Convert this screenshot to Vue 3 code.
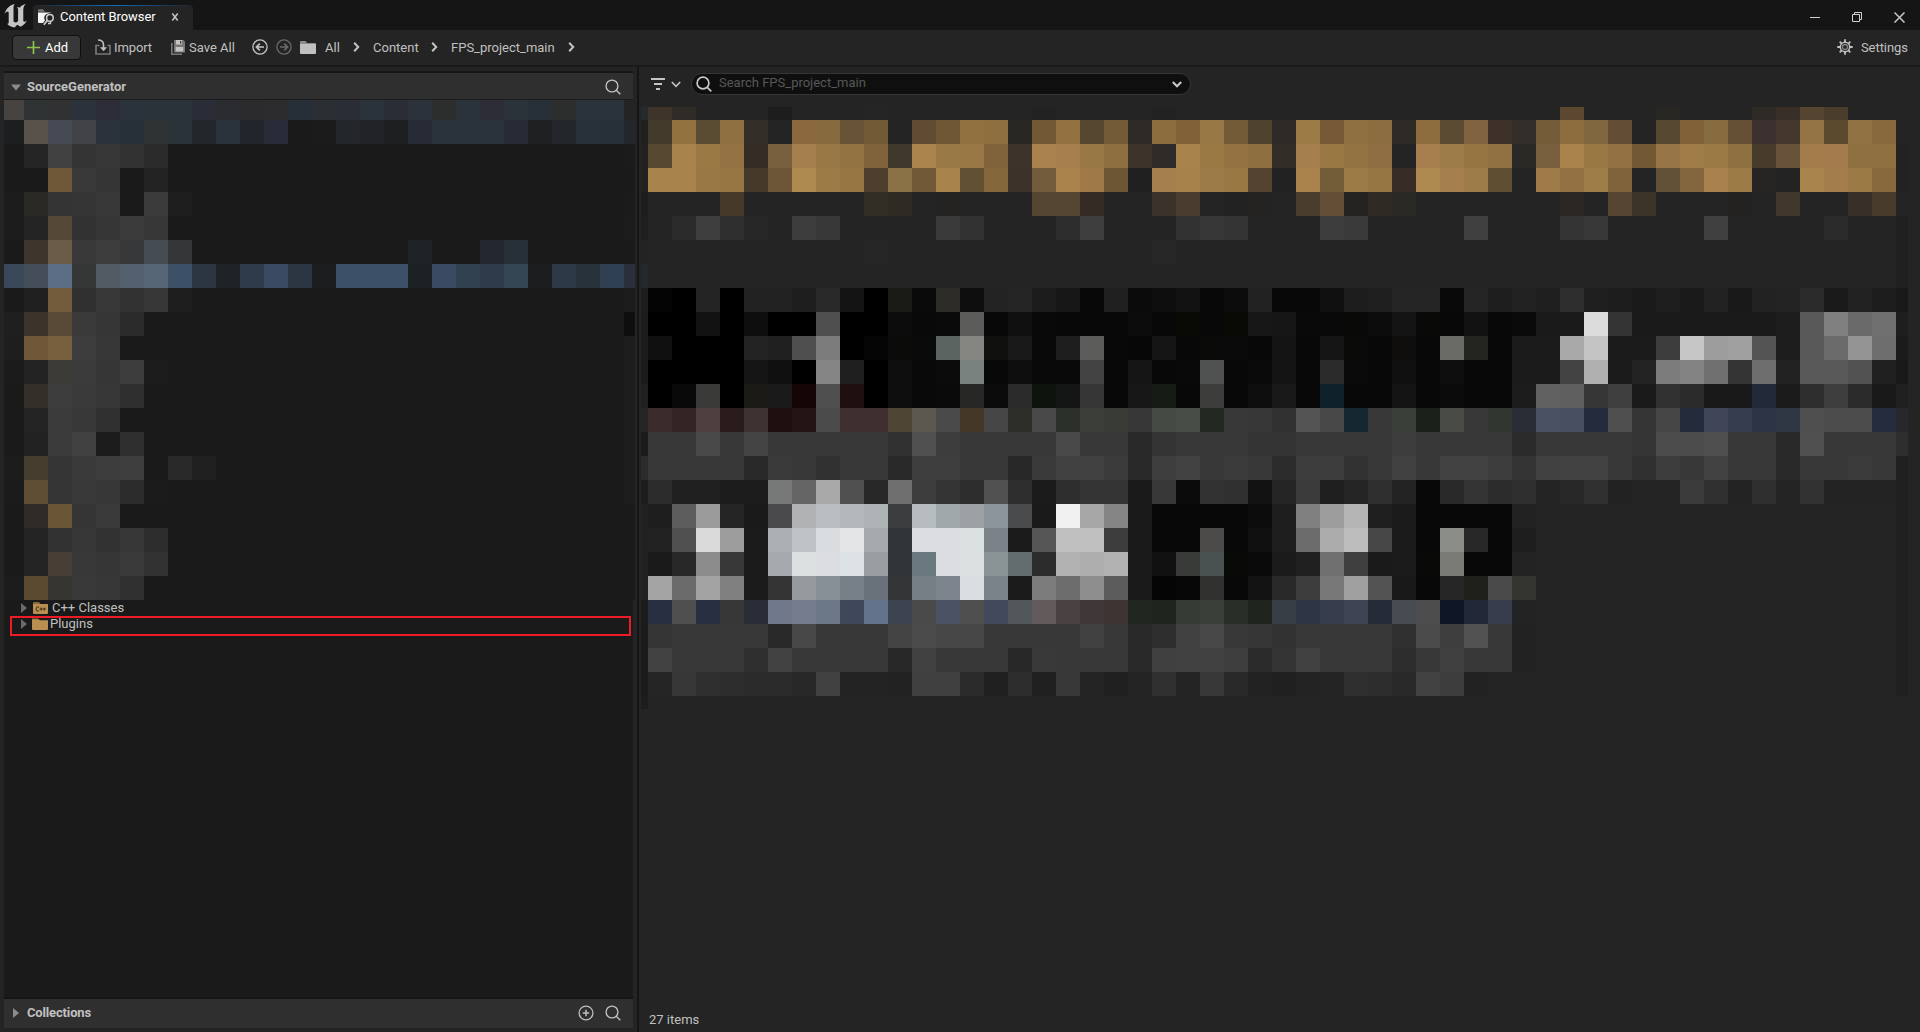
<script setup>
// Shades are two hex digits for a grey or six for a colour; "*n" repeats one.
const parse = (rows, width, filler) =>
  rows.map((row) => {
    const cells = []
    for (const token of row.trim().split(/\s+/)) {
      const [shade, times] = token.split('*')
      const colour = '#' + (shade.length === 2 ? shade.repeat(3) : shade)
      for (let i = 0; i < Number(times || 1); i++) cells.push(colour)
    }
    while (cells.length < width) cells.push(filler)
    return cells
  })

const treeTiles = parse([
  '464340 2f3333 313134 2b323b 2c2d38 2a323b 2a323a 2a323a 2a2c37 2a2c30 2b2b2e 2c2b2e 262f38 2b2e33 2a2c36 2a323b 2a2c36 2b323b 2c2e2e 2a323b 2c2d37 2a323a 272f38 2c2e2e 2a323b 2a323b 24',
  '1c1e20 58524b 464a55 424347 2b323b 272f38 2f3333 2a323a 23262b 2a323b 22252b 292c38 1a 1b 23262b 222327 1d1f20 272b35 2a323b 2a323b 2a323b 272a35 1f2021 23262b 28303a 272f39 23262b',
  '1a 25 41 34 37 32 2b 1a*19 1b',
  '1a 1a 6f5838 39 35 1a 23 1a*19 1a',
  '1c 2b2926 333334 35 38 1a 3b 1e 1a*18 1b',
  '1c 24 544837 32 36 3b 37 1a*19 1c',
  '1a 3e362d 6b5c48 39 3d 373839 454c54 343637 1a*9 1f2326 1a*2 23272f 272f38',
  '384858 454e58 5c6e86 353636 525b64 526070 576676 3c5067 2c3642 1f2327 2f3a4a 3a4a62 2c3642 1b1d1f 3c5067*3 1c2123 3a4a62 314150 2f3a4a 344553 1b1d1e 2d3946 28323a 2f3f52 2b2f3c',
  '1a 20 735c3b 30 38 32 37 1e 1a*18 1c',
  '1f 3c332b 594a37 3a 36 2b 1a*20 0e',
  '1e 6f5738 785f3d 3c 37 1a*21 1d',
  '1b 23 3c3b36 3b 36 3d 1c 1a*19 1d',
  '1a 352f29 3c 3a 37 2f 1a*20 1d',
  '1a 24 3b 38 30 1a*21 1d',
  '1a 21 3b 41 1c 2f 1a*20 1d',
  '1c 463d2e 35 3a 3d 3e 1a 29 20 1a*17 1d',
  '1b 5f4d34 35 39 37 2c 1b 1a*19 1d',
  '1a 2f2b28 695636 35 3a 1a',
  '1a 24 32 37 32 37 2d 1a',
  '1a 24 483e35 38 36 3a 32 1a',
  '1c 5c4a30 363530 39 37 30 1a'
], 27, '#1a1a1a')

const assetTiles = parse([
  '252a2d 3e342a 2f2b27 24*3 1d 24*3 25 24*6 21 24*4 22 24*16 5c4830 24*3 292723 24*3 2e2b27 382f29 544430 4a3d2b 24',
  '20 443a2c 92723f 5a4b33 8f7040 332e28 24 8b693c 856b3e 675336 735a36 24 604b32 6f5735 917140 8e7040 292723 735835 937141 564731 735b37 2d2a27 8c6d3d 816138 977744 745b38 50432e 2d2a27 9c7b47 765a37 8f7041 8c6d3f 2d2a26 8d6d3e 5c4b33 82633f 3c3029 342e2a 755c38 8d6d3e 7f663e 634e35 24 564831 816138 876c40 654f35 3b302d 44372c 947344 5c4a2f 917243 88683d 24',
  '21 574831 a8834c 9a7945 947243 362c26 78603f a57f4e 997845 947343 80633a 40382b aa844c 997a46 997846 80633b 3d332a aa824e a67e4e 987845 8d6f3f 3e332a 2f2b28 a8834c 9a7945 947242 8e6f3f 322d27 a47e4d 997844 937342 8e6d41 24 a67e4e 9e7c49 967543 917142 2a2925 78603f aa834c 997844 937143 735834 977546 a07c48 9b7a46 8f7040 463a2b 67523a a47c4c a37b4c 8f7040 8f7040 22',
  '21 a8834c*2 987744 977644 45392a 6d5637 ad884f 9c7b46 977644 4d3e2d 8b7146 715938 a9834c 625033 85673c 3b3128 735c3b a9824c 9f7947 6c5634 20 a5804e a7834c 9c7b48 997844 53432e 22 a9824c 735c38 9c7b47 967643 382c26 ae894f a57e4e 9e7c49 604e32 24 9f7b4a 937143 9f7d48 7f633a 24 625136 83663d a8814f 9c7b46 262523 23 a9844d a47d4d 9b7a45 88693c 22',
  '1d 24*3 45392a 24*5 322e26 2e2b25 24 242321 24*3 544630*2 352b25 24*2 3b332b 4a3c2e 24 22 242322 24 4b3d2d 654e36 242321 302a25 2a2926 24*6 2b2824 24 564530 3c3429 24*3 232221 24 41372d 24*2 382f28 463a2a 24',
  '1e 24 2a 3e 2f 27 24 3c 38 24*4 3a 32 24*3 2d 3e 24*3 32 37 34 24*3 3c 3a 24*4 40 24*3 34 38 24*4 40 24*4 2a 24*2 20',
  '23 24*9 26 24*11 27 24*30 20',
  '22282b 24*52 20',
  '1d 04 00 24 00 22 21 1e 29 14 00 1a1a16 0a 2d2c29 0e 23 25 1c 17 08 20 0b 0e 12 08 0c 22 08 08 0f 1d 1f 25 25 09 25 1e 22 1f 2e 1f 1d 1a 1e 1a 22 19 21 23 2b 1a 21 1d 19',
  '1c 00*2 12 00 0e 00*2 4e 00*2 0c 09 0a 5c5c5a 08 0f 09 08*3 0c 08 090906 08 090906 17 16 09*2 090907 0c 14 090907 08 12 08 0a 1a*2 dc 33 1a*6 1d 59 80 69 70 1e',
  '1c 0f 00*3 23 20 4f 7b 00 05 0b0b09 0a 5b6361 858581 0f0f0d 19 09 1e 5c5c5a 08 07 15 08 0a0a08 0a 08 14 08 15 0a0a08 08 0f0e0c 08 6a6a66 242421 08 1b*2 a8 c4 1b*2 3c c6 9d a0 54 1d 59 6b 94 6e 1b',
  '1b 00*4 15 0f 00 85 1f 00 0e 09 0b 7a8280 08 0e 09*2 43 08 15 08 09 505251 08 0a 14 08 2b 0a 08 0f 08 0e 08*2 1b*2 43 b0 1b 23 7c 83 70 34 6e 21 59*2 52 20 19',
  '20 00 09 3a3a38 00 1c1a17 1a 160505 4f 1f0f0f 00 0e 09 0a 272725 0b 2b 0f130e 131614 36 08 17 141b13 08 3c3c3a 08 0e 18 08 102229 08*2 14 08 0b 08*2 1c 60 5f 36 3f 1a 31 2a 19*2 222a39 1b 2e 3e 2a 19 20',
  '25 3b2b2b 342525 4f4040 2b1c1c 3e3332 1f1010 231414 4b 3e2e2e*2 4e4534 5c574f 4a 433728 45 2d2e29 4a494a 2b3029 3a3d38 393b37 37 444b43 474e45 232822 38 37 31 54 48 152830 38 3a4038 1b2019 494b47 38 31372f 2a2d36 4a5162 484f60 242b3c 4f 35 45 242b3b 3f4556 363d4f 2d3446 2e3742 4f 4c*2 252c3d 28282c',
  '1b 38*2 49 38 44 38*5 31 50 3c 38*4 49 38*2 29 34 38*3 34 34 38*4 3d 38*4 2b 38*4 35 4c*2 4e 38*2 29 50 38*3 2e',
  '2b 38*4 29 3a 38 31 38*2 29 3e*2 38*2 28 3a 41*2 3b 29 3e 42 38 3b 38 2c 3c 3d 32 38 41 38 42*2 3c 34 41 42*2 38 30 3c 38 42 38*2 29 38*2 3b 38 20',
  '1d 2c 20*2 1c*2 767977 65 a9 50 28 6f 3c 34 2d 51 2e 1b 2e 33*2 1a 38 0b 32 30 12 25 3b 1f 25 2f 23 08 29 34 2c 2f 24 28 30 21 24*2 3b 30 23 2f 24 32 23*3 20',
  '21 1e 5d 9b 25 1a 4a4a4c b0b1b3 b9bec1 b4b8bb adb2b5 3c3d3f b5bbbf a1a8aa 9da1a5 8c949c 4a4b4d 1a f1 a7 84 1a 08*4 0c 1e 80 9d b5 1f 1b 08*4 21 24*15 20',
  '21 22 50 da 9d 1b abb0b3 bfc3c6 d9dddf e4e5e7 a5abad 303537 dcdde0*2 dbe0e1 7b8289 1b 56 c0*2 3c 1a 08*2 4c4b49 08 0f 1e 6c ac bd 47 1b 08 8a8d88 28 08 1e 24*15 20',
  '21 1a 28 8c 38 1b a4a9ae dae0e0 dcdde0 dde2e4 999ea2 303537 6a7880 dcdde0 dce0e1 8a9395 636c6f 2c b2 ae b1 1a 11 383b38 485150 090907 0a 1b 20 70 3f 1a 1b 090907 7a7b77 08*2 23 24*15 20',
  '21 a4 6b a3 80 1b 33 959a9e 878f96 777f88 69727b 333537 767e86 7d848d d9dfe0 7a838a 1b 7b 6d 8d 5c 1a 05 06 31312f 08 13 29 3d 78 9f 53 19 08 26 1f1f1b 4a 343431 24*15 20',
  '1c 272f40 4f 272f40 37 2a2d38 70788c 747c8e 6c7887 3f485b 62738b 3d4450 4a 4b5263 4f 42495c 52575c 635b5b 4a4242 403838 3e3434 222621 1f251e 353b35 393f38 292e27 1f251e 373d44 2e3545 363c4b 3e4454 252b37 474b52 4d 0f1626 222838 363c4c 23 24*15 20',
  '1b 35 38*4 29 48 38*3 44 4b 47*2 38*4 41 38 29 2e 41 48 38 36 32 38*4 30 4b 3e 52 38 21 24*15 20',
  '1b 42 38*3 2f 42 38*4 28 41 38*3 28 39 38*3 29 40 41*2 3e 2a 34 41 38*3 2d 38 40 38*2 22 24*15 20',
  '1b 25 37 2f 2d 2b*2 28 41 23*2 22 40*2 2a 20 2d 20 38 24 20 24 30 24 38 29 22 20 23 24 2f 2d 29 42 3d 22 24*17 20',
  '1d 24'
], 54, '#242424')

const crumbs = ['All', 'Content', 'FPS_project_main']
</script>

<template>
  <div class="window">
    <header class="titlebar">
      <svg class="logo" width="24" height="25" viewBox="0 0 24 25">
        <path fill="#c4c4c4" d="M10.6 1C5.800 2.200 1.800 5.800 .5 11c1.400-1.900 2.500-2.600 3.300-2.500.8.100.9.800.9 1.700v9c0 1.100-.5 1.600-1.600 1.500 1.700 2.200 4.400 3.500 7.500 3.700l2.600-2.700 3.400 2c2.900-1.300 5.200-3.600 6.400-6.500-1.400 1.300-2.400 1.700-3.100 1.400-.5-.2-.6-.6-.6-1.200V6.300c.1-2.200 1.100-3.800 2.600-5.200-2.400.5-4.600 1.700-6.300 3.600-.9-.5-1.700-.6-2.700-.3.900.7 1.200 1.200 1.200 2.200V18l-1.500 1.200c-.8.500-2.600.1-3.100-.6V5.600c0-2 .2-3.300 1.100-4.600z" />
      </svg>
      <div class="tab">
        <svg width="17" height="17" viewBox="0 0 17 17">
          <path fill="#777982" d="M0 3V1.200Q0 .3 1 .3h4l2 2.400H0z" />
          <path fill="#f5f5f5" d="M0 3.600h13V14H1Q0 14 0 13z" />
          <path fill="#242424" d="M4.500 14.500L7 11.500a5 5 0 0 1 1-6.200L13 3.600h4V16H4.500z" />
          <circle cx="11.900" cy="8.900" r="3.300" fill="none" stroke="#d0d0d0" stroke-width="1.500" />
          <path stroke="#d0d0d0" stroke-width="1.800" d="M9.500 11.300L5.800 15.800" />
          <path stroke="#d0d0d0" stroke-width="1.300" d="M12.500 12v2.500h-2.500" fill="none" />
        </svg>
        <span class="tab-name">Content Browser</span>
        <svg class="tab-close" width="8" height="8" viewBox="0 0 8 8"><path d="M1.300 .6l5.400 6.800M6.700 .6L1.300 7.400" stroke="#c0c0c0" stroke-width="1.600" /></svg>
      </div>
      <div class="window-buttons">
        <svg width="10" height="12" viewBox="0 0 10 12"><path d="M0 6.500h10" stroke="#d0d0d0" /></svg>
        <svg width="10" height="10" viewBox="0 0 10 10"><path d="M.5 2.500h7v7h-7zM2.500 2.500v-2h7v7h-2" fill="none" stroke="#d0d0d0" /></svg>
        <svg width="11" height="11" viewBox="0 0 11 11"><path d="M.5 .5l10 10M10.500 .5l-10 10" stroke="#c8c8c8" stroke-width="1.500" /></svg>
      </div>
    </header>

    <nav class="toolbar">
      <button class="add">
        <svg width="13" height="13" viewBox="0 0 13 13"><path d="M6.500 0v13M0 6.500h13" stroke="#8bc24a" stroke-width="1.700" /></svg>
        <span>Add</span>
      </button>
      <div class="action import">
        <svg width="16" height="16" viewBox="0 0 16 16">
          <path d="M4.500 6.500H1v8.500h14V6.500h-2.500" fill="none" stroke="#777" stroke-width="1.700" />
          <path d="M3 1q5.500 0 5.500 5v4" fill="none" stroke="#c0c0c0" stroke-width="1.600" />
          <path d="M5 8.200h7L8.500 12.200z" fill="#c0c0c0" />
        </svg>
        <span>Import</span>
      </div>
      <div class="action save">
        <svg width="14" height="15" viewBox="0 0 14 15">
          <path d="M.8 3v11.200H11" fill="none" stroke="#777" stroke-width="1.600" />
          <path d="M3 0h9.500L14 1.500V12.500H3z" fill="#777" />
          <path d="M5 0h6v4.500H5zM4.700 7h7.600v4.500H4.700z" fill="#c4c4c4" />
          <path d="M9 1h1.200v2.500H9z" fill="#333" />
        </svg>
        <span>Save All</span>
      </div>
      <svg class="round" width="16" height="16" viewBox="0 0 16 16" fill="none" stroke="#c4c4c4">
        <circle cx="8" cy="8" r="7.100" stroke-width="1.300" /><path d="M12 8H4.500M7.800 4.600L4.400 8l3.400 3.400" stroke-width="1.700" />
      </svg>
      <svg class="round" width="16" height="16" viewBox="0 0 16 16" fill="none" stroke="#6a6a6a">
        <circle cx="8" cy="8" r="7.100" stroke-width="1.300" /><path d="M4 8h7.500M8.200 4.600L11.600 8l-3.400 3.400" stroke-width="1.700" />
      </svg>
      <svg class="folder" width="16" height="13" viewBox="0 0 16 13">
        <path fill="#8c8c8c" d="M0 3V1Q0 0 1 0h4.500l1.600 2H15q1 0 1 1z" /><path fill="#c0c0c0" d="M0 3h16v9q0 1-1 1H1q-1 0-1-1z" />
      </svg>
      <div v-for="(crumb, i) in crumbs" :key="crumb" :class="['crumb', 'level-' + i]">
        <span>{{ crumb }}</span>
        <svg width="7" height="10" viewBox="0 0 7 10"><path d="M1.200 .8L5.200 5l-4 4.200" fill="none" stroke="#c4c4c4" stroke-width="2" /></svg>
      </div>
      <div class="settings">
        <svg width="16" height="16" viewBox="-8 -8 16 16">
          <g stroke="#c0c0c0" stroke-width="1.800"><path d="M0-7.700V7.700M-7.700 0H7.700M-5.300-5.300L5.300 5.300M5.300-5.300L-5.300 5.300" /></g>
          <circle r="4.700" fill="#242424" stroke="#c0c0c0" stroke-width="1.500" />
          <circle r="2.500" fill="#242424" stroke="#858585" stroke-width="1.300" />
        </svg>
        <span>Settings</span>
      </div>
    </nav>

    <main class="body">
      <aside class="sources">
        <div class="section-head source-head">
          <svg width="10" height="7" viewBox="0 0 10 7"><path d="M0 .5h10L5 6.500z" fill="#8c8c8c" /></svg>
          <b>SourceGenerator</b>
          <svg class="end" width="16" height="16" viewBox="0 0 16 16" fill="none" stroke="#c0c0c0" stroke-width="1.400"><circle cx="7" cy="7" r="5.900" /><path d="M11.300 11.300l4 4" /></svg>
        </div>
        <div class="tree">
          <div class="mosaic tree-mosaic">
            <template v-for="(row, r) in treeTiles" :key="r">
              <i v-for="(colour, c) in row" :key="c" :style="{ background: colour }"></i>
            </template>
          </div>
          <div class="node">
            <svg width="6" height="10" viewBox="0 0 6 10"><path d="M0 0l6 5-6 5z" fill="#6a6a6a" /></svg>
            <svg class="node-icon" width="16" height="13" viewBox="0 0 16 13">
              <path fill="#8a6a3a" d="M0 3V1Q0 0 1 0h5l1.500 2H14q1 0 1 1z" /><path fill="#b98f51" d="M0 2h15v9q0 1-1 1H1q-1 0-1-1z" />
              <path fill="none" stroke="#3c2f1c" stroke-width="1" d="M6 5.300Q3.200 4 3.200 7T6 8.700M6.600 7h3M8.100 5.500v3M9.800 7h3M11.300 5.500v3" />
            </svg>
            <span>C++ Classes</span>
          </div>
          <div class="node marked">
            <svg width="6" height="10" viewBox="0 0 6 10"><path d="M0 0l6 5-6 5z" fill="#6a6a6a" /></svg>
            <svg class="node-icon" width="16" height="12" viewBox="0 0 16 12">
              <path fill="#8a6a3a" d="M0 2V.5h6L7.500 2z" /><path fill="#b98f51" d="M0 1.500h7l1 .7h8V11q0 1-1 1H1q-1 0-1-1z" />
            </svg>
            <span>Plugins</span>
          </div>
        </div>
        <div class="section-head collections">
          <svg width="6" height="10" viewBox="0 0 6 10"><path d="M0 0l6 5-6 5z" fill="#8c8c8c" /></svg>
          <b>Collections</b>
          <svg class="end" width="16" height="16" viewBox="0 0 16 16" fill="none" stroke="#c0c0c0" stroke-width="1.300"><circle cx="8" cy="8" r="6.900" /><path d="M8 4.800v6.400M4.800 8h6.400" stroke-width="1.500" /></svg>
          <svg width="16" height="16" viewBox="0 0 16 16" fill="none" stroke="#c0c0c0" stroke-width="1.400"><circle cx="7" cy="7" r="5.900" /><path d="M11.300 11.300l4 4" /></svg>
        </div>
      </aside>

      <section class="assets">
        <div class="filters">
          <svg width="15" height="12" viewBox="0 0 15 12"><path d="M0 1h14M3 6h8M5 11h4" stroke="#c4c4c4" stroke-width="2" /></svg>
          <svg class="filter-arrow" width="10" height="7" viewBox="0 0 10 7"><path d="M.8 1L5 5.400 9.200 1" fill="none" stroke="#c4c4c4" stroke-width="1.600" /></svg>
          <div class="search">
            <svg width="16" height="16" viewBox="0 0 16 16" fill="none" stroke="#c8c8c8" stroke-width="1.700"><circle cx="7" cy="7" r="5.900" /><path d="M11.300 11.300l4 4" /></svg>
            <span>Search FPS_project_main</span>
            <svg width="10" height="7" viewBox="0 0 10 7"><path d="M.8 1L5 5.200 9.200 1" fill="none" stroke="#c8c8c8" stroke-width="2.100" /></svg>
          </div>
        </div>
        <div class="mosaic asset-mosaic">
          <template v-for="(row, r) in assetTiles" :key="r">
            <i v-for="(colour, c) in row" :key="c" :style="{ background: colour }"></i>
          </template>
        </div>
        <footer>27 items</footer>
      </section>
    </main>
  </div>
</template>

<style>
body { margin: 0; background: #242424; }
</style>

<style scoped>
.window {
  box-sizing: border-box;
  width: 1920px;
  height: 1032px;
  display: flex;
  flex-direction: column;
  overflow: hidden;
  background: #242424;
  color: #c0c0c0;
  font: 13px/16px Roboto, "Liberation Sans", sans-serif;
  white-space: nowrap;
}
svg { display: block; flex: none; }

.titlebar { flex: none; height: 30px; display: flex; align-items: flex-end; background: #151515; }
.logo { margin: 0 0 2px 4px; }
.tab {
  box-sizing: border-box;
  display: flex;
  align-items: center;
  width: 160px;
  height: 25px;
  margin-left: 5px;
  padding: 0 14px 0 5px;
  border-radius: 4px 4px 0 0;
  background: linear-gradient(90deg, #242424, #0f6ac0 50%, #242424) top / 100% 1px no-repeat #242424;
  color: #fff;
}
.tab-name { flex: 1; margin-left: 5px; padding-bottom: 2px; letter-spacing: -.05px; }
.tab-close { margin-bottom: 2px; }
.window-buttons { display: flex; align-items: center; gap: 32px; height: 26px; margin: 0 15px 0 auto; align-self: center; padding-top: 4px; box-sizing: border-box; }

.toolbar { flex: none; box-sizing: border-box; height: 37px; padding: 0 12px 1px 12px; display: flex; align-items: center; border-bottom: 2px solid #1a1a1a; }
.toolbar span { display: block; padding-top: 1px; }
.add {
  box-sizing: border-box;
  width: 69px;
  height: 25px;
  padding: 0 0 0 14px;
  display: flex;
  align-items: center;
  gap: 5px;
  border: 1px solid #0f0f0f;
  border-radius: 4px;
  background: #383838;
  color: #fff;
  font: inherit;
}
.action { display: flex; align-items: center; }
.import { margin-left: 14px; gap: 3px; width: 76px; }
.import span { letter-spacing: -.1px; }
.save { gap: 4px; width: 81px; }
.round { margin-right: 8px; }
.folder { margin: 0 9px 0 0; }
.crumb { display: flex; align-items: center; justify-content: space-between; }
.level-0 { width: 35px; }
.level-1 { width: 65px; margin-left: 13px; }
.level-2 { width: 124px; margin-left: 13px; }
.settings { display: flex; align-items: center; gap: 8px; margin-left: auto; }
.settings span { letter-spacing: -.05px; }

.body { flex: 1; min-height: 0; display: flex; }
.sources { box-sizing: border-box; width: 637px; padding: 4px; display: flex; flex-direction: column; }
.section-head {
  box-sizing: border-box;
  flex: none;
  width: 629px;
  display: flex;
  align-items: center;
  padding: 0 12px 0 7px;
  border-top: 2px solid #151515;
  background: #2f2f2f;
}
.section-head b { font-weight: 700; font-size: 13px; }
.end { margin-left: auto; }
.source-head { height: 29px; padding-top: 2px; border-bottom: 1px solid #1a1a1a; }
.source-head b { margin-left: 6px; }
.collections { height: 31px; padding: 0 12px 1px 9px; }
.collections b { margin-left: 8px; letter-spacing: -.15px; }
.collections .end { margin-right: 11px; }
.tree { flex: 1; width: 629px; background: #1a1a1a; }

.mosaic { display: grid; }
.mosaic i { display: block; }
.tree-mosaic { width: 631px; grid-template-columns: 20px repeat(25, 24px) 11px; grid-template-rows: 20px repeat(20, 24px); }
.asset-mosaic { width: 1267px; grid-template-columns: 7px repeat(52, 24px) 12px; grid-template-rows: 13px repeat(24, 24px) 13px; }

.node { display: flex; align-items: center; height: 16px; padding-left: 17px; }
.node-icon { margin: 0 3px 0 6px; }
.marked { box-sizing: border-box; width: 621px; height: 20px; margin-left: 6px; padding: 0 0 5px 9px; border: 2px solid #ed1c24; }
.marked .node-icon { margin: 0 2px 0 5px; }

.assets { flex: 1; box-sizing: border-box; border-left: 2px solid #151515; padding-left: 2px; display: flex; flex-direction: column; }
.filters { flex: none; height: 40px; display: flex; align-items: center; padding-left: 10px; box-sizing: border-box; padding-bottom: 6px; }
.filter-arrow { margin: 0 10px 0 5px; }
.search {
  box-sizing: border-box;
  width: 500px;
  height: 22px;
  display: flex;
  align-items: center;
  padding: 0 8px 0 4px;
  border: 1px solid #353535;
  border-radius: 11px;
  background: #0f0f0f;
  color: #575757;
}
.search span { flex: 1; margin-left: 7px; padding-bottom: 2px; }
footer { margin: auto 0 4px 8px; }
</style>
